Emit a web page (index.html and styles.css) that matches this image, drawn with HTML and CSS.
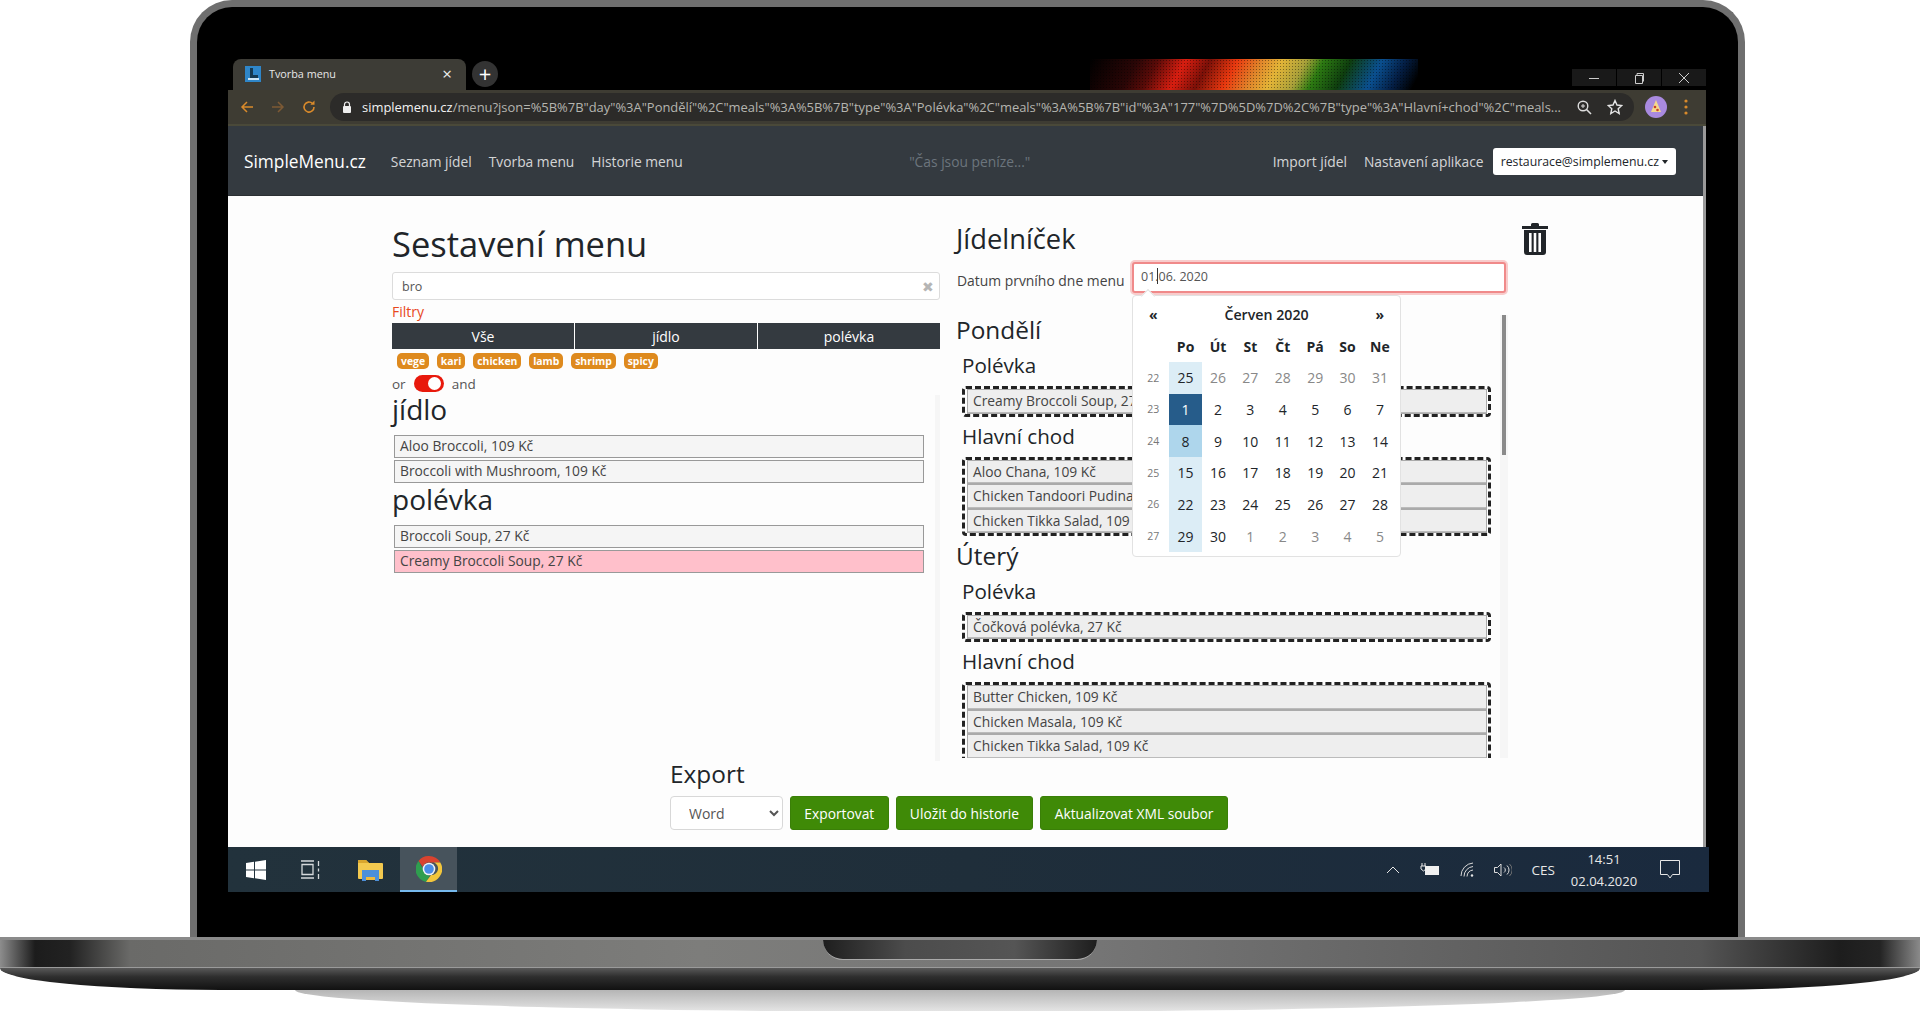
FILE: index.html
```html
<!DOCTYPE html>
<html lang="cs">
<head>
    <meta charset="UTF-8">
    <meta name="viewport" content="width=device-width, initial-scale=1.0">
    <title>SimpleMenu.cz</title>
    <link rel="stylesheet" href="styles.css">
</head>
<body>
    <div class="laptop-lid">
        <div class="screen">
            <div class="tab-strip">
                <div class="rainbow"></div>
                <div class="tab">
                    <svg class="favicon" width="16" height="16" viewBox="0 0 16 16"><rect width="16" height="16" fill="#2f86c9"/><path d="M5 2h3v7h5v3H5z" fill="#15384f"/><path d="M3 12h11v2H3z" fill="#cfe6f5"/></svg>
                    <span class="tab-title">Tvorba menu</span>
                    <span class="tab-close">×</span>
                </div>
                <div class="new-tab">+</div>
                <div class="window-controls">
                    <div class="win-btn"><svg width="12" height="12" viewBox="0 0 12 12"><path d="M1 6.500h10" stroke="#ccc"/></svg></div>
                    <div class="win-btn"><svg width="12" height="12" viewBox="0 0 12 12"><path d="M2.500 3.500h7v8h-7zM4 3.500V1.500h6.500v8" fill="none" stroke="#ccc"/></svg></div>
                    <div class="win-btn"><svg width="12" height="12" viewBox="0 0 12 12"><path d="M1 1l10 10M11 1L1 11" stroke="#ccc"/></svg></div>
                </div>
            </div>

            <div class="toolbar">
                <svg class="nav-icon" width="16" height="16" viewBox="0 0 16 16"><path d="M14 8H3M8 3L3 8l5 5" fill="none" stroke="#d98a2b" stroke-width="1.500"/></svg>
                <svg class="nav-icon" width="16" height="16" viewBox="0 0 16 16"><path d="M2 8h11M8 3l5 5-5 5" fill="none" stroke="#7d5a35" stroke-width="1.500"/></svg>
                <svg class="nav-icon" width="16" height="16" viewBox="0 0 16 16"><path d="M13 8a5 5 0 1 1-1.500-3.500" fill="none" stroke="#d98a2b" stroke-width="1.600"/><path d="M13.500 1.500v4.200H9.300z" fill="#d98a2b"/></svg>
                <div class="omnibox">
                    <svg class="lock" width="10" height="12" viewBox="0 0 10 12"><path d="M2.500 5V3.500a2.500 2.500 0 0 1 5 0V5" fill="none" stroke="#eee" stroke-width="1.200"/><rect x="1" y="5" width="8" height="7" rx="1" fill="#eee"/></svg>
                    <div class="url"><b>simplemenu.cz</b>/menu?json=%5B%7B"day"%3A"Pondělí"%2C"meals"%3A%5B%7B"type"%3A"Polévka"%2C"meals"%3A%5B%7B"id"%3A"177"%7D%5D%7D%2C%7B"type"%3A"Hlavní+chod"%2C"meals...</div>
                    <svg class="omni-icon" width="16" height="16" viewBox="0 0 16 16"><circle cx="7" cy="7" r="4.800" fill="none" stroke="#ddd" stroke-width="1.400"/><path d="M10.500 10.500L15 15" stroke="#ddd" stroke-width="1.600"/><path d="M5 7h4M7 5v4" stroke="#ddd"/></svg>
                    <svg class="omni-icon" width="16" height="16" viewBox="0 0 16 16"><path d="M8 1.500l2 4.500 4.800.5-3.600 3.200 1 4.800L8 12l-4.200 2.500 1-4.800L1.200 6.500 6 6z" fill="none" stroke="#e6e6e6" stroke-width="1.400"/></svg>
                </div>
                <div class="avatar">
                    <svg width="22" height="22" viewBox="0 0 22 22"><circle cx="11" cy="11" r="11" fill="#a98adf"/><path d="M11 4l5 12H6z" fill="#f5d98a"/><circle cx="10" cy="11" r="1.300" fill="#c8402c"/><circle cx="12.500" cy="14" r="1.300" fill="#c8402c"/></svg>
                </div>
                <svg class="menu-dots" width="4" height="18" viewBox="0 0 4 18"><circle cx="2" cy="3" r="1.600" fill="#d98a2b"/><circle cx="2" cy="9" r="1.600" fill="#d98a2b"/><circle cx="2" cy="15" r="1.600" fill="#d98a2b"/></svg>
            </div>

            <div class="page">
                <div class="page-main">
                    <nav class="navbar">
                        <a class="brand">SimpleMenu.cz</a>
                        <a class="nav-link">Seznam jídel</a>
                        <a class="nav-link">Tvorba menu</a>
                        <a class="nav-link">Historie menu</a>
                        <div class="quote">"Čas jsou peníze..."</div>
                        <a class="nav-link">Import jídel</a>
                        <a class="nav-link">Nastavení aplikace</a>
                        <div class="user-btn">restaurace@simplemenu.cz<span class="caret-down"></span></div>
                    </nav>

                    <div class="content">
                        <section class="builder">
                            <h1 class="page-title">Sestavení menu</h1>
                            <div class="search-box">
                                <span>bro</span>
                                <span class="search-clear">✖</span>
                            </div>
                            <div class="filter-label">Filtry</div>
                            <div class="type-tabs">
                                <div class="type-tab">Vše</div>
                                <div class="type-tab">jídlo</div>
                                <div class="type-tab">polévka</div>
                            </div>
                            <div class="tags">
                                <span class="tag">vege</span>
                                <span class="tag">kari</span>
                                <span class="tag">chicken</span>
                                <span class="tag">lamb</span>
                                <span class="tag">shrimp</span>
                                <span class="tag">spicy</span>
                            </div>
                            <div class="logic-row">
                                <span>or</span>
                                <span class="toggle"></span>
                                <span>and</span>
                            </div>
                            <div class="meal-list">
                                <h3 class="group-title">jídlo</h3>
                                <div class="meal">Aloo Broccoli, 109 Kč</div>
                                <div class="meal">Broccoli with Mushroom, 109 Kč</div>
                                <h3 class="group-title">polévka</h3>
                                <div class="meal">Broccoli Soup, 27 Kč</div>
                                <div class="meal meal-selected">Creamy Broccoli Soup, 27 Kč</div>
                            </div>
                        </section>

                        <section class="plan">
                            <h2 class="plan-title">Jídelníček</h2>
                            <div class="date-row">
                                <label class="date-label">Datum prvního dne menu</label>
                                <div class="date-input">01.<span class="text-cursor"></span>06. 2020</div>
                                <div class="datepicker">
                                    <div class="dp-grid">
                                        <span class="dp-nav">«</span><span class="dp-title">Červen 2020</span><span class="dp-nav">»</span>
                                        <span></span><b>Po</b><b>Út</b><b>St</b><b>Čt</b><b>Pá</b><b>So</b><b>Ne</b>
                                        <i>22</i><span class="dp-week dp-old">25</span><span class="dp-off">26</span><span class="dp-off">27</span><span class="dp-off">28</span><span class="dp-off">29</span><span class="dp-off">30</span><span class="dp-off">31</span>
                                        <i>23</i><span class="dp-active">1</span><span>2</span><span>3</span><span>4</span><span>5</span><span>6</span><span>7</span>
                                        <i>24</i><span class="dp-next">8</span><span>9</span><span>10</span><span>11</span><span>12</span><span>13</span><span>14</span>
                                        <i>25</i><span class="dp-week">15</span><span>16</span><span>17</span><span>18</span><span>19</span><span>20</span><span>21</span>
                                        <i>26</i><span class="dp-week">22</span><span>23</span><span>24</span><span>25</span><span>26</span><span>27</span><span>28</span>
                                        <i>27</i><span class="dp-week">29</span><span>30</span><span class="dp-off">1</span><span class="dp-off">2</span><span class="dp-off">3</span><span class="dp-off">4</span><span class="dp-off">5</span>
                                    </div>
                                </div>
                            </div>
                            <div class="plan-scroll">
                                <div class="scroll-track"><div class="scroll-thumb"></div></div>
                                <h4 class="day-title">Pondělí</h4>
                                <h5 class="course-title">Polévka</h5>
                                <div class="drop-zone">
                                    <div class="plan-meal">Creamy Broccoli Soup, 27 Kč</div>
                                </div>
                                <h5 class="course-title">Hlavní chod</h5>
                                <div class="drop-zone">
                                    <div class="plan-meal">Aloo Chana, 109 Kč</div>
                                    <div class="plan-meal">Chicken Tandoori Pudina, 109 Kč</div>
                                    <div class="plan-meal">Chicken Tikka Salad, 109 Kč</div>
                                </div>
                                <h4 class="day-title">Úterý</h4>
                                <h5 class="course-title">Polévka</h5>
                                <div class="drop-zone">
                                    <div class="plan-meal">Čočková polévka, 27 Kč</div>
                                </div>
                                <h5 class="course-title">Hlavní chod</h5>
                                <div class="drop-zone">
                                    <div class="plan-meal">Butter Chicken, 109 Kč</div>
                                    <div class="plan-meal">Chicken Masala, 109 Kč</div>
                                    <div class="plan-meal">Chicken Tikka Salad, 109 Kč</div>
                                </div>
                            </div>
                        </section>

                        <svg class="trash" width="26" height="32" viewBox="0 0 26 32">
                            <path d="M0 3h9V1.500Q9 0 10.500 0h5Q17 0 17 1.500V3h9v3H0z" fill="#212529"/>
                            <path d="M2 7h22v22q0 3-3 3H5q-3 0-3-3z" fill="#212529"/>
                            <path d="M7 10h2.600v19H7zM11.700 10h2.600v19h-2.600zM16.400 10H19v19h-2.600z" fill="#fff"/>
                        </svg>
                    </div>

                    <div class="export">
                        <h4 class="export-title">Export</h4>
                        <div class="export-row">
                            <select class="export-select"><option>Word</option></select>
                            <button class="btn-green">Exportovat</button>
                            <button class="btn-green">Uložit do historie</button>
                            <button class="btn-green">Aktualizovat XML soubor</button>
                        </div>
                    </div>
                </div>
                <div class="page-scrollbar"></div>
            </div>

            <div class="taskbar">
                <svg class="task-win" width="20" height="20" viewBox="0 0 20 20"><path d="M0 3l8-1.200v7.700H0zM9 1.700L20 0v9.500H9zM0 10.500h8v7.700L0 17zM9 10.500h11V20L9 18.300z" fill="#fff"/></svg>
                <svg class="task-view" width="20" height="20" viewBox="0 0 20 20"><path d="M1 4.500h11v10H1zM0 1h13M0 18h13M17.500 1v5M17.500 8.500v3M17.500 14v5" fill="none" stroke="#d5d9db" stroke-width="1.300"/></svg>
                <svg class="task-folder" width="25" height="22" viewBox="0 0 25 22"><path d="M0 2q0-1 1-1h7l3 3h13q1 0 1 1v14q0 1-1 1H1q-1 0-1-1z" fill="#f3c94f"/><path d="M0 2q0-1 1-1h7l3 3H0z" fill="#d9a62e"/><path d="M4 11h17v11h-4v-4H8v4H4z" fill="#4d8fd8"/><path d="M8 18h9v3H8z" fill="#f0b93a"/></svg>
                <div class="task-chrome">
                    <svg width="26" height="26" viewBox="0 0 26 26">
                        <path d="M13 0a13 13 0 0 1 11.300 6.500H13a6.500 6.500 0 0 0-6.200 4.500L2.500 5A13 13 0 0 1 13 0z" fill="#d9432f"/>
                        <path d="M2.500 5l5 8.800a6.500 6.500 0 0 0 6.500 5.700L10 26A13 13 0 0 1 2.500 5z" fill="#2f9e4f"/>
                        <path d="M24.300 6.500A13 13 0 0 1 10 25.700l5-6.700a6.500 6.500 0 0 0 3-12.500z" fill="#f3c63c"/>
                        <circle cx="13" cy="13" r="6.300" fill="#f1f3f4"/>
                        <circle cx="13" cy="13" r="4.800" fill="#4a8ee8"/>
                    </svg>
                </div>
                <div class="tray">
                    <svg class="tray-chevron" width="14" height="8" viewBox="0 0 14 8"><path d="M1 7l6-6 6 6" fill="none" stroke="#e6e6e6"/></svg>
                    <svg class="tray-battery" width="19" height="13" viewBox="0 0 19 13"><path d="M2 0v3M5 0v3M1 3h5v3L3.500 8 1 6z" fill="none" stroke="#e6e6e6"/><rect x="5" y="3" width="14" height="9" fill="#f0f0f0"/></svg>
                    <svg class="tray-wifi" width="14" height="15" viewBox="0 0 14 15"><path d="M1 14A13 13 0 0 1 13 1M4 14.500A10 10 0 0 1 13 4.500M7 14.500A7 7 0 0 1 13 8" fill="none" stroke="#d8d8d8"/><circle cx="12" cy="13.500" r="1.200" fill="#e6e6e6"/></svg>
                    <svg class="tray-sound" width="18" height="14" viewBox="0 0 18 14"><path d="M.5 4.500h3L7 1v12L3.500 9.500h-3zM10 4.500a3 3 0 0 1 0 5M13 2.500a6 6 0 0 1 0 9" fill="none" stroke="#dcdcdc"/><path d="M15.500 1a8 8 0 0 1 0 12" fill="none" stroke="#777"/></svg>
                    <span class="tray-lang">CES</span>
                    <div class="tray-clock"><div>14:51</div><div>02.04.2020</div></div>
                    <svg class="tray-note" width="20" height="20" viewBox="0 0 20 20"><path d="M.5.500h19v14h-7L10 18l-2.500-3.500h-7z" fill="none" stroke="#e6e6e6"/></svg>
                </div>
            </div>
        </div>
    </div>

    <div class="laptop-base">
        <div class="base-band"><div class="notch"></div></div>
        <div class="base-lip"></div>
    </div>
    <div class="laptop-shadow"></div>
</body>
</html>
```

FILE: styles.css
```css
body {
    font-family: 'Open Sans', 'Noto Sans', sans-serif;
    margin: 0;
    width: 1920px;
    height: 1011px;
    overflow: hidden;
    background-color: #fff;
    color: #212529;
}

h1, h2, h3, h4, h5 {
    margin: 0;
    font-weight: 400;
}

/* laptop frame */
.laptop-lid {
    width: 1555px;
    height: 937px;
    margin-left: 190px;
    padding: 52px 0 0 31px;
    box-sizing: border-box;
    border: 7px solid #6f6f6f;
    border-bottom: none;
    border-radius: 42px 42px 0 0;
    background-color: #000;
}

.laptop-base {
    border-top: 3px solid #8a8a8a;
}

.base-band {
    position: relative;
    height: 27px;
    border-bottom: 1px solid #9a9a9a;
    background: linear-gradient(90deg, #8d8d8d 0, #1c1c1c 35px, #222 70px, #6a6a68 130px, #7d7d7b 700px, #757575 1100px, #555 1700px, #1d1d1d 1840px, #242424 1880px, #8a8a8a 1920px);
}

.notch {
    position: absolute;
    left: 823px;
    top: 0;
    width: 274px;
    height: 19px;
    border-radius: 0 0 24px 24px;
    border-bottom: 1px solid #aaa;
    background: linear-gradient(90deg, #1e1e1e, #4c4c4c 30%, #555 70%, #1e1e1e);
}

.base-lip {
    height: 22px;
    border-radius: 0 0 220px 220px / 0 0 22px 22px;
    background: linear-gradient(180deg, #595959, #2e2e2e 40%, #111);
}

.laptop-shadow {
    width: 1330px;
    height: 22px;
    margin-left: 295px;
    border-radius: 0 0 50% 50% / 0 0 100% 100%;
    background: linear-gradient(180deg, #b5b5b5, #e6e6e6);
}

.screen {
    width: 1481px;
}

/* browser chrome */
.tab-strip {
    position: relative;
    display: flex;
    align-items: flex-start;
    height: 31px;
}

.rainbow {
    position: absolute;
    left: 862px;
    top: 0;
    width: 328px;
    height: 31px;
    background:
        radial-gradient(rgba(0, 0, 0, 0.4) 1px, transparent 1px) 0 0 / 3px 3px,
        linear-gradient(118deg, #000 0, #2a0606 14%, #5a0b08 20%, #d81e10 28%, #7a1008 35%, #e8380f 43%, #e0842a 50%, #e3b437 56%, #a8a03a 63%, #2d7a12 68%, #0e3d0e 76%, #0a4f8f 85%, #041e44 92%, #000 98%);
}

.tab {
    position: relative;
    display: flex;
    align-items: center;
    width: 233px;
    height: 31px;
    margin-left: 5px;
    padding: 0 14px 2px 12px;
    box-sizing: border-box;
    border-radius: 8px 8px 0 0;
    background-color: #3d3c36;
    color: #e8e8e8;
    font-size: 10.800px;
}

.favicon {
    margin-right: 8px;
}

.tab-title {
    flex: 1;
}

.tab-close {
    font-size: 17px;
    color: #eee;
}

.new-tab {
    position: relative;
    width: 26px;
    height: 26px;
    margin: 2px 0 0 6px;
    border-radius: 50%;
    background-color: #333;
    color: #fff;
    font-size: 22px;
    line-height: 25px;
    text-align: center;
}

.window-controls {
    position: relative;
    display: flex;
    gap: 1px;
    margin: 10px 3px 0 auto;
}

.win-btn {
    display: flex;
    align-items: center;
    justify-content: center;
    width: 44px;
    height: 17px;
    background-color: #191919;
}

.toolbar {
    display: flex;
    align-items: center;
    width: 1478px;
    height: 36px;
    box-sizing: border-box;
    padding-left: 11px;
    border-bottom: 2px solid #4a4939;
    background-color: #3e3c33;
}

.nav-icon {
    margin-right: 15px;
}

.omnibox {
    display: flex;
    align-items: center;
    flex: none;
    width: 1304px;
    height: 28px;
    margin-left: -2px;
    padding: 0 9px 0 12px;
    box-sizing: border-box;
    border-radius: 14px;
    background-color: #2c2b29;
    color: #b5b5b0;
    font-size: 12.950px;
}

.lock {
    flex: none;
    margin-right: 10px;
}

.url {
    flex: none;
    width: 1199px;
    white-space: nowrap;
    overflow: hidden;
}

.url b {
    font-weight: 400;
    color: #f2f2f2;
}

.omni-icon {
    flex: none;
    margin-left: 15px;
}

.avatar {
    display: flex;
    margin-left: 11px;
}

.menu-dots {
    margin-left: 17px;
}

/* page */
.page {
    display: flex;
    width: 1478px;
    height: 721px;
    background-color: #fdfdfd;
}

.page-main {
    flex: 1;
    min-width: 0;
}

.page-scrollbar {
    width: 3px;
    background-color: #9a9a9a;
}

.navbar {
    display: flex;
    align-items: center;
    gap: 17px;
    height: 70px;
    padding: 2px 27px 0 16px;
    box-sizing: border-box;
    background-color: #343a40;
    border-bottom: 1px solid #2b2f33;
    font-size: 13.800px;
}

.brand {
    margin-right: 8px;
    color: #fff;
    font-size: 17.300px;
}

.nav-link {
    color: rgba(255, 255, 255, 0.8);
}

.quote {
    flex: 1;
    padding-right: 16px;
    color: #6c757d;
    text-align: center;
}

.user-btn {
    display: flex;
    align-items: center;
    height: 27px;
    margin-left: -8px;
    padding: 0 8px;
    border-radius: 3px;
    background-color: #fff;
    color: #212529;
    font-size: 12.300px;
}

.caret-down {
    width: 0;
    height: 0;
    margin-left: 3px;
    border-top: 4px solid #212529;
    border-left: 3px solid transparent;
    border-right: 3px solid transparent;
}

.content {
    display: flex;
    align-items: flex-start;
    height: 562px;
    padding-left: 164px;
}

/* left column */
.builder {
    width: 548px;
    flex: none;
    height: 562px;
    margin-right: 16px;
}

.page-title {
    height: 76px;
    padding-top: 23px;
    box-sizing: border-box;
    font-size: 34.500px;
    line-height: 50px;
}

.search-box {
    display: flex;
    justify-content: space-between;
    align-items: center;
    height: 28px;
    padding: 0 5px 0 9px;
    box-sizing: border-box;
    border: 1px solid #dcdcdc;
    border-radius: 3px;
    background-color: #fff;
    color: #555;
    font-size: 12.500px;
}

.search-clear {
    color: #b5b5b5;
    font-size: 14px;
}

.filter-label {
    height: 23px;
    color: #e8481c;
    font-size: 14px;
    line-height: 24px;
}

.type-tabs {
    display: flex;
    gap: 1px;
    height: 26px;
}

.type-tab {
    flex: 1;
    background-color: #343a40;
    color: #fff;
    font-size: 14px;
    line-height: 28px;
    text-align: center;
}

.tags {
    display: flex;
    gap: 7.800px;
    height: 16px;
    margin-top: 4px;
    padding-left: 5px;
}

.tag {
    padding: 0 4px;
    border-radius: 5px;
    background-color: #de8a1e;
    color: #fff;
    font-size: 10.400px;
    font-weight: 700;
    line-height: 16px;
}

.logic-row {
    display: flex;
    align-items: center;
    gap: 8px;
    height: 23px;
    margin-top: 3px;
    color: #555;
    font-size: 13.500px;
}

.toggle {
    position: relative;
    width: 30px;
    height: 17px;
    border-radius: 9px;
    background-color: #e8190c;
}

.toggle::after {
    content: "";
    position: absolute;
    right: 3px;
    top: 2px;
    width: 13px;
    height: 13px;
    border-radius: 50%;
    background-color: #fff;
}

.meal-list {
    height: 366px;
    padding: 0 11px 0 2px;
    box-sizing: border-box;
    border-right: 5px solid #f6f6f6;
}

.group-title {
    height: 34px;
    margin: 2px 0 6px -2px;
    font-size: 28px;
    line-height: 28px;
}

.meal-list .group-title:first-child {
    margin-top: 0;
}

.meal {
    height: 23px;
    margin-bottom: 2px;
    padding-left: 5px;
    box-sizing: border-box;
    border: 1px solid #999;
    background-color: #f5f5f5;
    color: #444;
    font-size: 13.800px;
    line-height: 19px;
}

.meal-selected {
    background-color: #ffc0cb;
}

/* right column */
.plan {
    flex: none;
    width: 552px;
}

.plan-title {
    height: 34px;
    margin-bottom: 4px;
    padding-top: 26px;
    font-size: 27.300px;
    line-height: 34px;
}

.date-row {
    position: relative;
    display: flex;
    align-items: center;
    height: 35px;
}

.date-label {
    width: 174px;
    padding: 6px 0 0 1px;
    box-sizing: border-box;
    color: #444;
    font-size: 13.900px;
}

.date-input {
    width: 374px;
    height: 31px;
    margin: 2px;
    padding-left: 7px;
    box-sizing: border-box;
    border: 2px solid #f08a8a;
    border-radius: 3px;
    background-color: #fff;
    color: #555;
    font-size: 12.500px;
    line-height: 26px;
    box-shadow: 0 0 0 2px #f8cccc;
}

.text-cursor {
    display: inline-block;
    width: 1px;
    height: 16px;
    margin: 0 1px 0 -2px;
    vertical-align: -3px;
    background-color: #333;
}

.datepicker {
    position: absolute;
    left: 176px;
    top: 35px;
    z-index: 2;
    width: 269px;
    height: 262px;
    box-sizing: border-box;
    padding: 2px 4px 5px;
    border: 1px solid #e2e2e2;
    border-radius: 4px;
    background-color: #fff;
}

.datepicker::before {
    content: "";
    position: absolute;
    left: 10px;
    top: -5px;
    width: 9px;
    height: 9px;
    background-color: #fff;
    border-top: 1px solid #e2e2e2;
    border-left: 1px solid #e2e2e2;
    transform: rotate(45deg);
}

.dp-grid {
    display: grid;
    grid-template-columns: repeat(8, 32.400px);
    grid-template-rows: 32px 32px repeat(6, 31.670px);
    font-size: 14px;
    text-align: center;
}

.dp-grid > * {
    display: flex;
    align-items: center;
    justify-content: center;
    font-style: normal;
}

.dp-grid i {
    font-size: 10.500px;
    color: #777;
}

.dp-grid b {
    font-size: 14px;
}

.dp-title {
    grid-column: span 6;
    font-weight: 600;
    font-size: 14.200px;
}

.dp-nav {
    font-weight: 700;
    font-size: 14px;
}

.dp-off {
    color: #888;
}

.dp-week {
    background-color: #dcedf6;
}

.dp-old {
    color: #212529;
}

.dp-active {
    background-color: #265c8a;
    color: #fff;
}

.dp-next {
    background-color: #aed6ec;
}

.plan-scroll {
    position: relative;
    height: 443px;
    margin-top: 20px;
    padding: 0 17px 0 6px;
    box-sizing: border-box;
    overflow: hidden;
}

.scroll-track {
    position: absolute;
    right: 0;
    top: 0;
    width: 8px;
    height: 100%;
    background-color: #f6f6f6;
}

.scroll-thumb {
    width: 4px;
    height: 140px;
    margin-left: 2px;
    background-color: #8a8a8a;
}

.day-title {
    height: 31px;
    margin: 4.500px 0 0 -6px;
    font-size: 24.400px;
    line-height: 29px;
}

.day-title:first-of-type {
    margin-top: 0;
}

.course-title {
    height: 25px;
    margin: 7px 0 8px;
    font-size: 20.600px;
    line-height: 25px;
}

.drop-zone {
    padding: 0 1px 0 2px;
    border: 3px dashed #222;
    border-radius: 4px;
}

.plan-meal {
    height: 24.500px;
    padding-left: 5px;
    box-sizing: border-box;
    border: 1px solid #aaa;
    box-shadow: inset 0 -1px #bbb;
    background-color: #eee;
    color: #444;
    font-size: 13.800px;
    line-height: 22px;
    white-space: nowrap;
}

.trash {
    flex: none;
    margin: 27px 0 0 14px;
}

/* export */
.export {
    padding-left: 442px;
}

.export-title {
    height: 30px;
    font-size: 24.400px;
    line-height: 32px;
}

.export-row {
    display: flex;
    align-items: center;
    gap: 7px;
    margin-top: 8px;
}

.export-select {
    width: 113px;
    height: 34px;
    padding-left: 14px;
    border: 1px solid #d8d8d8;
    border-radius: 4px;
    background-color: #fff;
    color: #555;
    font-family: inherit;
    font-size: 14px;
}

.btn-green {
    height: 34px;
    padding: 0 13.300px;
    border: 1px solid #3a7f08;
    border-radius: 3px;
    background-color: #3f8a07;
    color: #fff;
    font-family: inherit;
    font-size: 13.800px;
}

/* taskbar */
.taskbar {
    display: flex;
    align-items: center;
    height: 45px;
    background: linear-gradient(90deg, #22323c, #1f2e3a 50%, #1a2a3e);
    color: #e8e8e8;
}

.task-win {
    margin-left: 18px;
}

.task-view {
    margin-left: 35px;
}

.task-folder {
    margin-left: 37px;
}

.task-chrome {
    display: flex;
    align-items: center;
    justify-content: center;
    width: 57px;
    height: 45px;
    margin-left: 17px;
    box-sizing: border-box;
    border-bottom: 2px solid #76b9ed;
    background-color: #47535c;
}

.tray {
    display: flex;
    align-items: center;
    margin-left: auto;
    padding-right: 29px;
}

.tray-battery {
    margin-left: 20px;
}

.tray-wifi {
    margin-left: 21px;
}

.tray-sound {
    margin-left: 20px;
}

.tray-lang {
    margin-left: 20px;
    font-size: 13.500px;
}

.tray-clock {
    width: 90px;
    margin-left: 4px;
    font-size: 13px;
    line-height: 22px;
    text-align: center;
}

.tray-note {
    margin-left: 11px;
}
```
